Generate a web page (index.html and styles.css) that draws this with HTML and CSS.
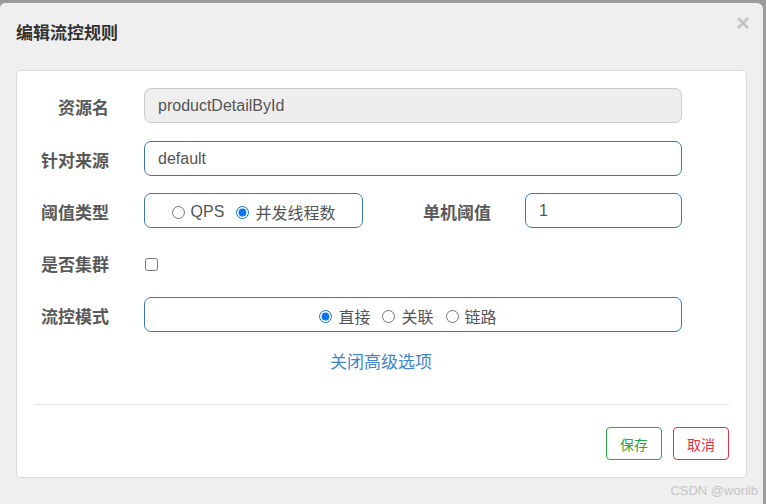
FILE: index.html
```html
<!DOCTYPE html>
<html lang="zh-CN">
<head>
    <meta charset="UTF-8">
    <title>编辑流控规则</title>
    <link rel="stylesheet" href="styles.css">
</head>
<body>
<div class="dialog">
    <!-- 标题 -->
    <div class="dialog-header">
        <h3 class="dialog-title">编辑流控规则</h3>
        <span class="close-btn">
            <svg width="12" height="12" viewBox="0 0 12 12">
                <path d="M1 1 L11 11 M11 1 L1 11" stroke="#c4c4c4" stroke-width="2.6" stroke-linecap="butt"/>
            </svg>
        </span>
    </div>

    <!-- 表单 -->
    <div class="card">
        <div class="form">
            <div class="row">
                <label class="label">资源名</label>
                <input class="field disabled" type="text" value="productDetailById" disabled>
            </div>
            <div class="row">
                <label class="label">针对来源</label>
                <input class="field" type="text" value="default">
            </div>
            <div class="row">
                <label class="label">阈值类型</label>
                <div class="radio-box small">
                    <label class="opt"><input type="radio" name="grade"> QPS</label>
                    <label class="opt"><input type="radio" name="grade" checked> 并发线程数</label>
                </div>
                <label class="label inner-label">单机阈值</label>
                <input class="field count" type="text" value="1">
            </div>
            <div class="row">
                <label class="label">是否集群</label>
                <input class="check" type="checkbox">
            </div>
            <div class="row">
                <label class="label">流控模式</label>
                <div class="radio-box wide">
                    <label class="opt"><input type="radio" name="strategy" checked> 直接</label>
                    <label class="opt"><input type="radio" name="strategy"> 关联</label>
                    <label class="opt"><input type="radio" name="strategy"> 链路</label>
                </div>
            </div>
            <div class="advance">
                <a href="javascript:" class="link">关闭高级选项</a>
            </div>
        </div>

        <div class="divider"></div>

        <div class="footer">
            <button class="btn btn-save">保存</button>
            <button class="btn btn-cancel">取消</button>
        </div>
    </div>
</div>
<div class="watermark">CSDN @worilb</div>
</body>
</html>
```

FILE: styles.css
```css
* {
    margin: 0;
    padding: 0;
    box-sizing: border-box;
}

body {
    background-color: #9b9b9b;
    font-family: "Liberation Sans", "Noto Sans CJK SC", sans-serif;
    height: 504px;
    overflow: hidden;
    position: relative;
}

/* 对话框 */
.dialog {
    margin-top: 3px;
    width: 763px;
    height: 520px;
    background-color: #efefef;
    border-radius: 5px 6px 0 0;
}

.dialog-header {
    display: flex;
    justify-content: space-between;
    padding: 20px 14px 0 16px;
    height: 67px;
}

.dialog-title {
    font-size: 17px;
    line-height: 22px;
    font-weight: bold;
    color: #333;
}

.close-btn {
    margin-top: -8px;
    display: block;
}

/* 白色卡片 */
.card {
    margin: 0 16px;
    height: 408px;
    background-color: #fff;
    border: 1px solid #dcdcdc;
    border-radius: 5px;
}

.form {
    padding: 17px 64px 0 0;
}

.row {
    display: flex;
    align-items: center;
    height: 35px;
    margin-bottom: 17px;
}

.row:first-child {
    margin-bottom: 18px;
}

.label {
    width: 92px;
    flex-shrink: 0;
    text-align: right;
    font-size: 17px;
    font-weight: bold;
    color: #595959;
    margin-right: 35px;
    padding-top: 2px;
}

.field {
    flex: 1;
    height: 35px;
    border: 1px solid #3a78b5;
    border-radius: 7px;
    padding: 0 13px;
    font-family: "Liberation Sans", "Noto Sans CJK SC", sans-serif;
    font-size: 16px;
    color: #555;
    background-color: #fff;
    outline: none;
}

.field.disabled {
    background-color: #eee;
    border-color: #ccc;
    color: #555;
}

.field.count {
    flex: none;
    width: 157px;
}

.radio-box {
    height: 35px;
    border: 1px solid #3a78b5;
    border-radius: 7px;
    display: flex;
    align-items: center;
    justify-content: center;
    gap: 12px;
    padding-top: 3px;
}

.radio-box.small {
    width: 219px;
}

.radio-box.wide {
    flex: 1;
    padding-right: 10px;
}

.opt {
    font-size: 16px;
    color: #555;
    display: flex;
    align-items: center;
    gap: 1px;
}

.opt input {
    width: 13px;
    height: 13px;
    margin: 0 5px 0 0;
    accent-color: #0b75ee;
}

.inner-label {
    flex: 1;
    width: auto;
    margin-right: 34px;
}

.check {
    width: 13px;
    height: 13px;
    margin: 4px 0 0 1px;
}

.advance {
    text-align: center;
    padding-left: 63px;
    margin-top: -1px;
}

.link {
    font-size: 17px;
    color: #3f86c8;
    text-decoration: none;
}

.divider {
    margin: 31px 17px 0 17px;
    height: 1px;
    background-color: #e3e3e3;
}

.footer {
    display: flex;
    justify-content: flex-end;
    gap: 11px;
    padding: 22px 17px 0 0;
}

.btn {
    width: 56px;
    height: 33px;
    background-color: #fff;
    border-radius: 4px;
    font-family: "Liberation Sans", "Noto Sans CJK SC", sans-serif;
    font-size: 14px;
}

.btn-save {
    border: 1px solid #28a745;
    color: #28a745;
}

.btn-cancel {
    border: 1px solid #dc3545;
    color: #dc3545;
}

/* 水印 */
.watermark {
    position: absolute;
    right: 8px;
    bottom: 6px;
    font-size: 13px;
    color: #c6c6c6;
}
```
